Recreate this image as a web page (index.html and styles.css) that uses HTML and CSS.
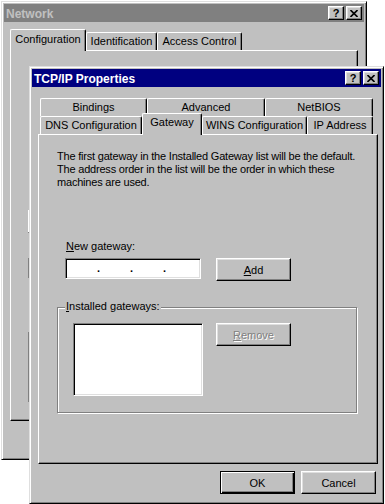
FILE: index.html
```html
<!DOCTYPE html>
<html lang="en">
<head>
  <meta charset="UTF-8">
  <meta name="viewport" content="width=device-width, initial-scale=1.0">
  <title>TCP/IP Properties</title>
  <link rel="stylesheet" href="styles.css">
</head>
<body>
  <div class="desktop">

    <!-- background dialog -->
    <div class="window net-window">
      <div class="titlebar inactive">
        <span class="title">Network</span>
        <div class="caption-btns">
          <span class="cap-btn">?</span>
          <span class="cap-btn">
            <svg width="8" height="7" viewBox="0 0 8 7"><path d="M0.5 0 L7.5 7 M7.5 0 L0.5 7" stroke="#000" stroke-width="1.6"/></svg>
          </span>
        </div>
      </div>
      <div class="tabs net-tabs">
        <div class="tab active tab-config">Configuration</div>
        <div class="tab tab-ident">Identification</div>
        <div class="tab tab-access">Access Control</div>
      </div>
      <div class="panel net-panel">
        <div class="btn peek-btn"></div>
        <div class="sunken peek-field"></div>
        <div class="group peek-group"></div>
      </div>
    </div>

    <!-- active dialog -->
    <div class="window tcp-window">
      <div class="titlebar">
        <span class="title">TCP/IP Properties</span>
        <div class="caption-btns">
          <span class="cap-btn">?</span>
          <span class="cap-btn">
            <svg width="8" height="7" viewBox="0 0 8 7"><path d="M0.5 0 L7.5 7 M7.5 0 L0.5 7" stroke="#000" stroke-width="1.6"/></svg>
          </span>
        </div>
      </div>

      <div class="tcp-tabs">
        <div class="tabs tab-row">
          <div class="tab tab-bindings">Bindings</div>
          <div class="tab tab-advanced">Advanced</div>
          <div class="tab tab-netbios">NetBIOS</div>
        </div>
        <div class="tabs tab-row">
          <div class="tab tab-dns">DNS Configuration</div>
          <div class="tab active tab-gateway">Gateway</div>
          <div class="tab tab-wins">WINS Configuration</div>
          <div class="tab tab-ip">IP Address</div>
        </div>
      </div>

      <div class="panel tcp-panel">
        <p class="gw-text">The first gateway in the Installed Gateway list will be the default.<br>The address order in the list will be the order in which these<br>machines are used.</p>

        <div class="field-label"><span class="u">N</span>ew gateway:</div>
        <div class="gw-row">
          <div class="sunken ip-field">
            <span class="ip-part"></span><span class="ip-dot">.</span>
            <span class="ip-part"></span><span class="ip-dot">.</span>
            <span class="ip-part"></span><span class="ip-dot">.</span>
            <span class="ip-part"></span>
          </div>
          <div class="btn"><span class="u">A</span>dd</div>
        </div>

        <div class="group gw-group">
          <span class="group-label"><span class="u">I</span>nstalled gateways:</span>
          <div class="sunken gw-list"></div>
          <div class="btn disabled"><span class="u">R</span>emove</div>
        </div>
      </div>

      <div class="dialog-buttons">
        <div class="btn default">OK</div>
        <div class="btn">Cancel</div>
      </div>
    </div>

  </div>
</body>
</html>
```

FILE: styles.css
```css
* {
  box-sizing: border-box;
}
body {
  margin: 0;
  background: #fff;
  font-family: "Liberation Sans", Arial, sans-serif;
  font-size: 11px;
  color: #000;
}
.desktop {
  position: relative;
  width: 385px;
  height: 504px;
  overflow: hidden;
}

/* window frame */
.window {
  position: absolute;
  background: #c0c0c0;
  border: 1px solid;
  border-color: #dfdfdf #000 #000 #dfdfdf;
  box-shadow: inset 1px 1px #fff, inset -1px -1px #808080;
  padding: 2px;
}
.net-window {
  left: 1px;
  top: 1px;
  width: 366px;
  height: 459px;
}
.tcp-window {
  left: 29px;
  top: 66px;
  width: 355px;
  height: 438px;
}

.titlebar {
  height: 18px;
  display: flex;
  align-items: center;
  justify-content: space-between;
  padding: 0 2px 0 2px;
  background: #000080;
  color: #fff;
}
.titlebar.inactive {
  background: #808080;
  color: #c0c0c0;
}
.title {
  font-weight: bold;
  font-size: 12px;
  padding-top: 1px;
}
.caption-btns {
  display: flex;
  gap: 2px;
}
.cap-btn {
  width: 16px;
  height: 14px;
  display: flex;
  align-items: center;
  justify-content: center;
  background: #c0c0c0;
  color: #000;
  border: 1px solid;
  border-color: #fff #000 #000 #fff;
  box-shadow: inset -1px -1px #808080, inset 1px 1px #dfdfdf;
  font-weight: bold;
  font-size: 11px;
}
.cap-btn svg {
  display: block;
}

/* tabs */
.tabs {
  display: flex;
  align-items: flex-end;
}
.tab {
  height: 18px;
  line-height: 17px;
  text-align: center;
  white-space: nowrap;
  background: #c0c0c0;
  border-top: 1px solid #fff;
  border-left: 1px solid #fff;
  border-right: 1px solid #000;
  border-radius: 2px 2px 0 0;
  box-shadow: inset -1px 0 #808080;
}
.tab.active {
  height: 22px;
  margin-bottom: -1px;
  position: relative;
  z-index: 1;
}
.net-tabs {
  height: 21px;
  margin: 7px 0 0 6px;
}
.tab-config { width: 76px; line-height: 19px; }
.tab-ident { width: 71px; }
.tab-access { width: 85px; }

.tcp-tabs {
  margin: 11px 0 0 8px;
}
.tab-row {
  height: 18px;
}
.tab-bindings { width: 107px; }
.tab-advanced { width: 118px; }
.tab-netbios { width: 108px; }
.tab-dns { width: 102px; }
.tab-gateway { width: 60px; }
.tab-wins { width: 105px; }
.tab-ip { width: 66px; }

/* tab panel */
.panel {
  background: #c0c0c0;
  border: 1px solid;
  border-color: #fff #000 #000 #fff;
  box-shadow: inset -1px -1px #808080;
}
.net-panel {
  margin-left: 6px;
  width: 348px;
  height: 371px;
  padding-left: 17px;
  padding-top: 159px;
}
.peek-btn {
  width: 75px;
}
.peek-field {
  margin-top: 25px;
  width: 150px;
  height: 21px;
}
.peek-group {
  margin-top: 53px;
  width: 300px;
  height: 70px;
}

.tcp-panel {
  margin-left: 6px;
  width: 340px;
  height: 330px;
  padding: 15px 0 0 18px;
}
.gw-text {
  margin: 0;
  line-height: 13px;
  white-space: nowrap;
  letter-spacing: -0.2px;
}
.field-label {
  margin-top: 51px;
  padding-left: 9px;
  line-height: 13px;
}
.gw-row {
  display: flex;
  align-items: flex-start;
  gap: 15px;
  margin-top: 5px;
  padding-left: 8px;
}
.u {
  text-decoration: underline;
}

/* controls */
.sunken {
  background: #fff;
  border: 1px solid;
  border-color: #808080 #fff #fff #808080;
  box-shadow: inset 1px 1px #000, inset -1px -1px #dfdfdf;
}
.ip-field {
  width: 136px;
  height: 21px;
  display: flex;
  align-items: center;
  padding-left: 1px;
  line-height: 19px;
}
.ip-part {
  width: 30px;
}
.ip-dot {
  width: 3px;
  font-weight: bold;
}
.btn {
  width: 75px;
  height: 23px;
  display: flex;
  align-items: center;
  justify-content: center;
  background: #c0c0c0;
  border: 1px solid;
  border-color: #fff #000 #000 #fff;
  box-shadow: inset -1px -1px #808080, inset 1px 1px #dfdfdf;
}
.btn.default {
  border-color: #000;
  box-shadow: inset 1px 1px #fff, inset -1px -1px #000, inset -2px -2px #808080;
}
.btn.disabled {
  color: #808080;
  text-shadow: 1px 1px #fff;
}

/* group box */
.group {
  border: 1px solid #808080;
  box-shadow: inset 1px 1px #fff, 1px 1px #fff;
}
.gw-group {
  position: relative;
  margin-top: 26px;
  width: 300px;
  height: 106px;
  padding: 15px 0 0 15px;
  display: flex;
  align-items: flex-start;
  gap: 13px;
}
.group-label {
  position: absolute;
  top: -8px;
  left: 7px;
  padding: 0 1px;
  line-height: 13px;
  background: #c0c0c0;
}
.gw-list {
  width: 130px;
  height: 73px;
}

.dialog-buttons {
  display: flex;
  justify-content: flex-end;
  gap: 6px;
  margin-top: 7px;
  padding-right: 5px;
}
```
